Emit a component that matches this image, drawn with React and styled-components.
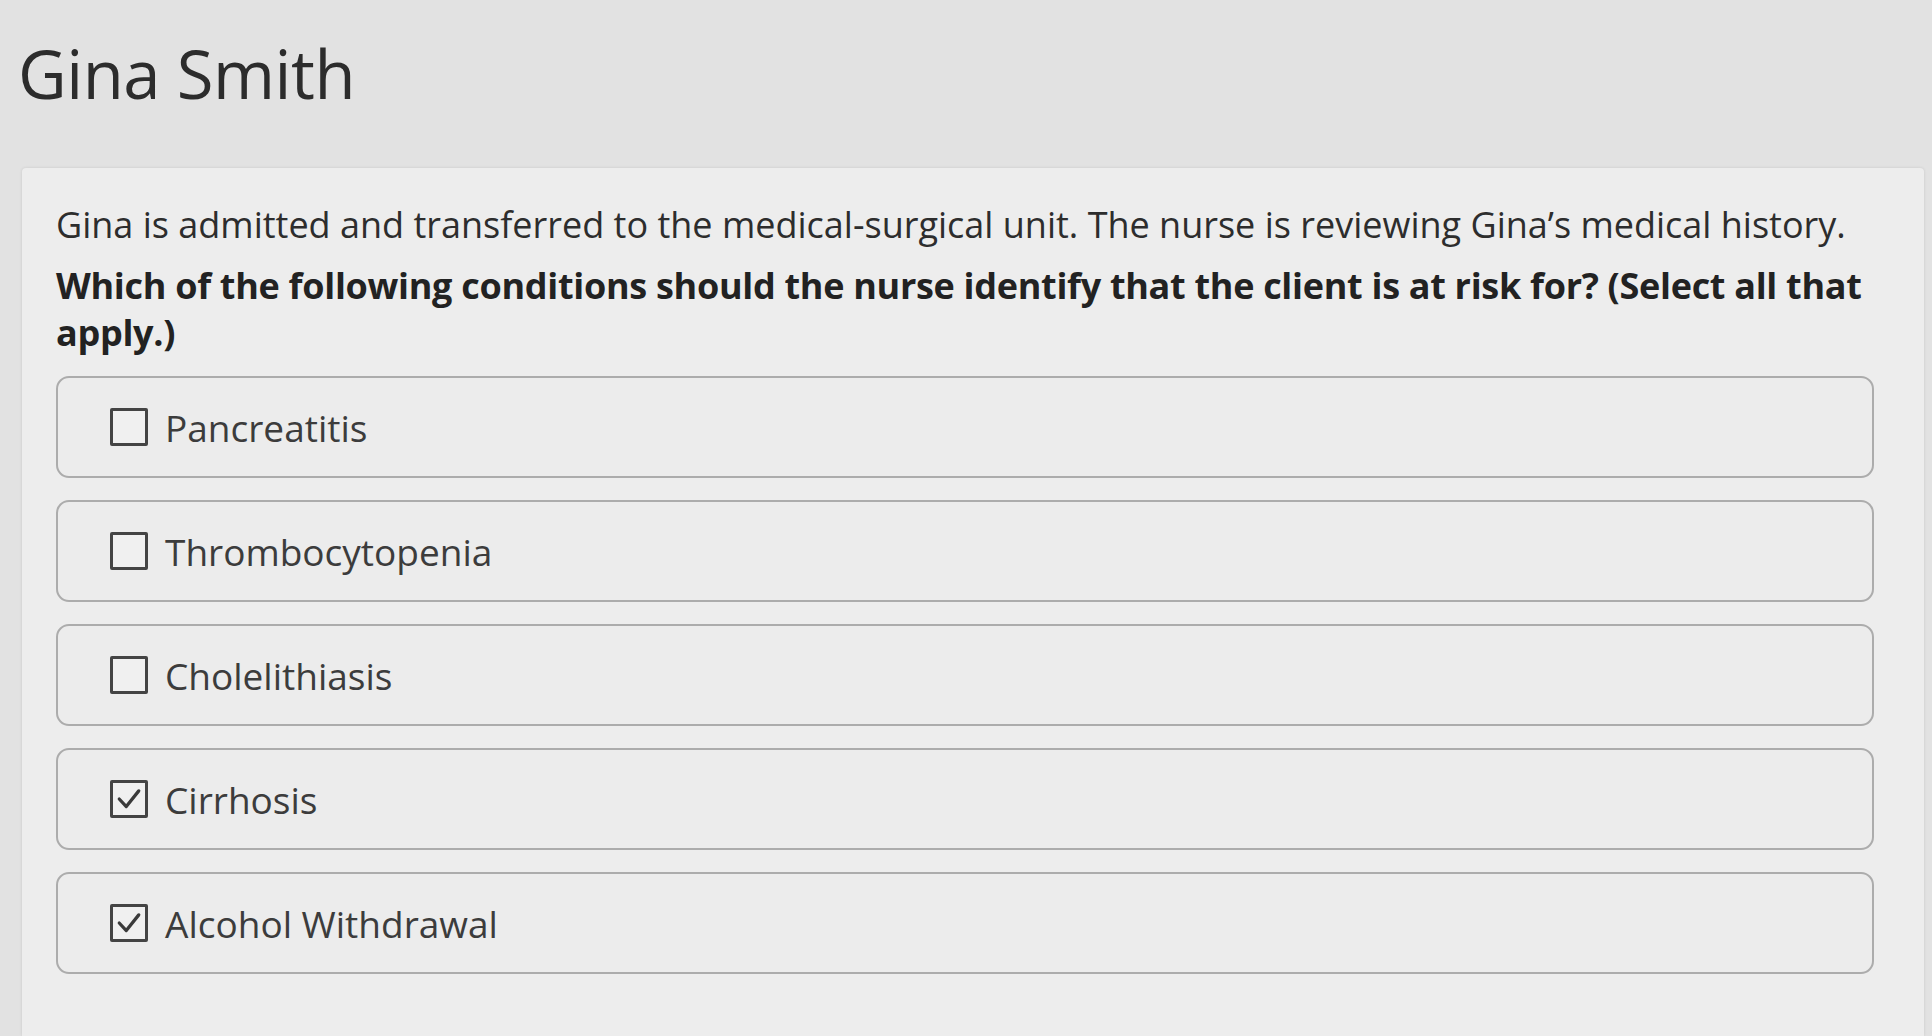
import React from 'react'
import styled, { createGlobalStyle } from 'styled-components'

const GlobalStyle = createGlobalStyle`
  html, body {
    margin: 0;
    padding: 0;
    background: #e2e2e2;
    font-family: 'Open Sans', 'Noto Sans', sans-serif;
    overflow: hidden;
  }
`

const Page = styled.div`
  display: flex;
  flex-direction: column;
  padding: 18px 8px 0 22px;
  height: 1036px;
  box-sizing: border-box;
`

const Title = styled.h1`
  margin: 0 0 0 -4px;
  font-size: 67px;
  font-weight: 400;
  line-height: 110px;
  color: #2c2c2c;
  letter-spacing: -0.5px;
`

const Card = styled.section`
  margin-top: 40px;
  flex: 1;
  background: #ededed;
  border-radius: 4px 4px 0 0;
  box-shadow: 0 0 3px rgba(0, 0, 0, 0.12);
  padding: 33px 50px 0 34px;
`

const Intro = styled.p`
  margin: 0;
  font-size: 36px;
  line-height: 47px;
  color: #2d2d2d;
`

const Question = styled.p`
  margin: 14px 0 0;
  font-size: 36px;
  line-height: 47px;
  font-weight: 700;
  color: #222;
  letter-spacing: -0.3px;
`

const Options = styled.div`
  display: flex;
  flex-direction: column;
  gap: 22px;
  margin-top: 20px;
`

const Option = styled.label`
  display: flex;
  align-items: center;
  gap: 17px;
  height: 102px;
  box-sizing: border-box;
  padding-left: 52px;
  border: 2px solid #acacac;
  border-radius: 13px;
  background: #ececec;
  cursor: pointer;
`

const Box = styled.span`
  display: inline-flex;
  align-items: center;
  justify-content: center;
  width: 38px;
  height: 38px;
  box-sizing: border-box;
  border: 3.5px solid #444;
  border-radius: 2px;
  background: #f0f0f0;
  flex-shrink: 0;
`

const Label = styled.span`
  font-size: 37px;
  color: #3c3c3c;
`

const Check = () => (
  <svg width="26" height="26" viewBox="0 0 24 24" fill="none">
    <path d="M3 12l6.5 7L21 4.5" stroke="#3a3a3a" strokeWidth="3" strokeLinecap="round" strokeLinejoin="round" />
  </svg>
)

const options = [
  { label: 'Pancreatitis', checked: false },
  { label: 'Thrombocytopenia', checked: false },
  { label: 'Cholelithiasis', checked: false },
  { label: 'Cirrhosis', checked: true },
  { label: 'Alcohol Withdrawal', checked: true },
]

export default function App() {
  return (
    <>
      <GlobalStyle />
      <Page>
        <Title>Gina Smith</Title>
        <Card>
          <Intro>
            Gina is admitted and transferred to the medical-surgical unit. The nurse is reviewing Gina’s medical history.
          </Intro>
          <Question>
            Which of the following conditions should the nurse identify that the client is at risk for? (Select all that apply.)
          </Question>
          <Options>
            {options.map((o) => (
              <Option key={o.label}>
                <Box>{o.checked && <Check />}</Box>
                <Label>{o.label}</Label>
              </Option>
            ))}
          </Options>
        </Card>
      </Page>
    </>
  )
}
